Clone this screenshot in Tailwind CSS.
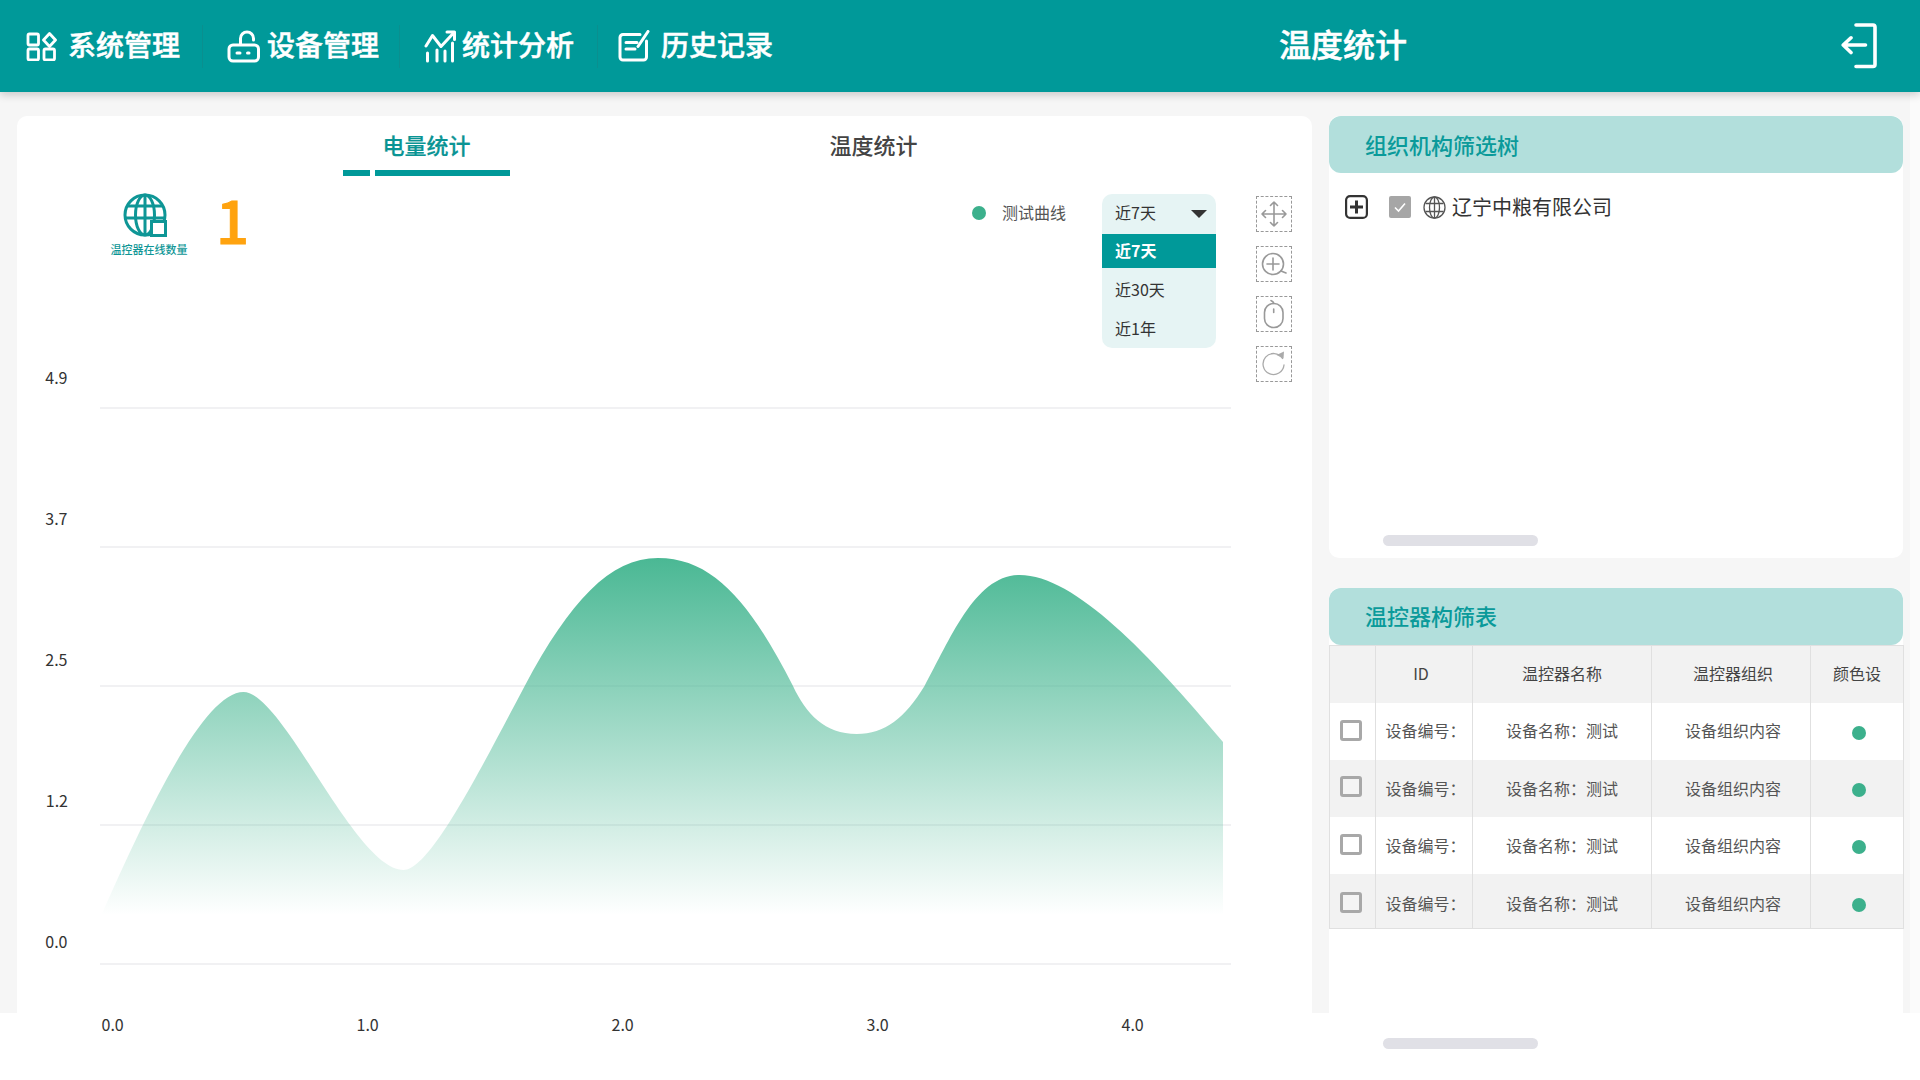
<!DOCTYPE html>
<html lang="zh-CN">
<head>
<meta charset="utf-8">
<title>温度统计</title>
<script src="https://cdn.jsdelivr.net/npm/@tailwindcss/browser@4"></script>
</head>
<body class="bg-white font-['Noto_Sans_CJK_SC',sans-serif] text-[#333] overflow-hidden">
<div class="w-[1920px] h-[1080px] overflow-hidden relative">
  <header class="relative z-10 h-[92px] bg-[#009999] flex items-center text-white shadow-[0_3px_8px_rgba(0,0,0,0.18)]">
    <nav class="flex items-center">
      <a class="w-[203px] h-[43px] pl-[26px] flex items-center border-r border-[#0a8f8f]">
        <svg class="w-[31px] h-[29px] shrink-0" viewBox="26 30 31 29" fill="none" stroke="#fff" stroke-width="2.8" stroke-linejoin="round">
          <rect x="28" y="32" width="10.5" height="11" rx="1.5"/>
          <path d="M49.5 31.5 L55.5 38 L49.5 44.5 L43.5 38 Z"/>
          <rect x="28" y="47" width="10.5" height="11" rx="1.5"/>
          <rect x="44" y="47" width="10.5" height="11" rx="1.5"/>
        </svg>
        <span class="ml-[11px] mb-[5px] text-[28px] leading-none font-medium [-webkit-text-stroke:0.5px] whitespace-nowrap">系统管理</span>
      </a>
      <a class="w-[197px] h-[43px] pl-[24px] flex items-center border-r border-[#0a8f8f]">
        <svg class="w-[33px] h-[33px] shrink-0" viewBox="227 30 33 33" fill="none" stroke="#fff" stroke-width="3" stroke-linecap="round">
          <rect x="229" y="45" width="29.5" height="16" rx="4"/>
          <path d="M240.5 44 V38.5 A6.5 6.5 0 0 1 253.5 38.5 V40"/>
          <path d="M237 53 h3 M247.5 53 h1.5"/>
        </svg>
        <span class="ml-[7px] mb-[5px] text-[28px] leading-none font-medium [-webkit-text-stroke:0.5px] whitespace-nowrap">设备管理</span>
      </a>
      <a class="w-[198px] h-[43px] pl-[24px] flex items-center border-r border-[#0a8f8f]">
        <svg class="w-[33px] h-[33px] shrink-0" viewBox="424 30 33 33" fill="none" stroke="#fff" stroke-width="3" stroke-linecap="round" stroke-linejoin="round">
          <path d="M426 46 L432.5 35.5 L441 46.5 L454 32.5"/>
          <path d="M447 32 H454.5 V39.5"/>
          <path d="M427.5 53 V61 M437 50 V61 M445 51 V61 M452.5 43 V61"/>
        </svg>
        <span class="ml-[5px] mb-[5px] text-[28px] leading-none font-medium [-webkit-text-stroke:0.5px] whitespace-nowrap">统计分析</span>
      </a>
      <a class="h-[43px] pl-[20px] flex items-center">
        <svg class="w-[32px] h-[32px] shrink-0" viewBox="618 31 32 32" fill="none" stroke="#fff" stroke-width="3" stroke-linecap="round" stroke-linejoin="round">
          <path d="M640 35.5 H623 A3 3 0 0 0 620 38.5 V58 A3 3 0 0 0 623 61 H643.5 A3 3 0 0 0 646.5 58 V42"/>
          <path d="M648 32.5 L638 47.5"/>
          <path d="M626 43.5 H637 M626 50 H635"/>
        </svg>
        <span class="ml-[11px] mb-[5px] text-[28px] leading-none font-medium [-webkit-text-stroke:0.5px] whitespace-nowrap">历史记录</span>
      </a>
    </nav>
    <h1 class="ml-[506px] mb-[7px] text-[32px] leading-none font-medium [-webkit-text-stroke:0.5px] whitespace-nowrap">温度统计</h1>
    <button class="ml-auto mr-[43px]">
      <svg class="w-[36px] h-[46px] block" viewBox="1841 22 36 46" fill="none" stroke="#fff" stroke-width="3.6" stroke-linecap="round" stroke-linejoin="round">
        <path d="M1856 24 H1873 A2 2 0 0 1 1875 26 V63.5 A2 2 0 0 1 1873 65.5 H1856"/>
        <path d="M1865.5 44 H1843.5 M1851 36.8 L1843.2 44 L1851 51.5"/>
      </svg>
    </button>
  </header>

  <main class="w-[1910px] h-[921px] bg-[#f6f6f6] pl-[17px] pt-[24px] flex gap-[17px] items-start">
    <section class="relative w-[1295px] h-[897px] bg-white rounded-t-[10px]">
      <svg class="absolute left-0 top-0 overflow-visible" width="1295" height="960" viewBox="17 116 1295 960" fill="#333" font-size="16">
        <defs>
          <linearGradient id="area" x1="0" y1="558" x2="0" y2="915" gradientUnits="userSpaceOnUse">
            <stop offset="0" stop-color="#4ab894"/>
            <stop offset="1" stop-color="#4ab894" stop-opacity="0"/>
          </linearGradient>
        </defs>
        <g stroke="#f1f1f3" stroke-width="2">
          <path d="M100 408 H1231 M100 547 H1231 M100 686 H1231 M100 825 H1231 M100 964 H1231"/>
        </g>
        <path fill="url(#area)" d="M101 916 C151 803 205 692 243.5 692 C283 692 355 870 403.7 870 C430 870 480 770 524.7 686 C570 601 610 558 658 558 C715 558 752 606 793 686 C806 714 825 734 856.8 734 C885 734 905 718 924.5 686 C950 640 975 575 1019.6 575 C1075 575 1150 655 1223 742 L1223 917 L101 917 Z"/>
        <g text-anchor="end">
          <text x="67.5" y="384">4.9</text>
          <text x="67.5" y="525">3.7</text>
          <text x="67.5" y="666">2.5</text>
          <text x="68" y="807">1.2</text>
          <text x="67.5" y="948">0.0</text>
        </g>
        <text x="101.5" y="1031">0.0</text>
        <text x="356.5" y="1031">1.0</text>
        <text x="611.5" y="1031">2.0</text>
        <text x="866.5" y="1031">3.0</text>
        <text x="1121.5" y="1031">4.0</text>
      </svg>

      <div class="relative flex pl-[326px] h-[60px]">
        <div class="w-[167px] flex flex-col items-center relative">
          <span class="text-[22px] leading-none font-medium [-webkit-text-stroke:0.2px] text-[#0a9494] mt-[17px]">电量统计</span>
          <div class="absolute bottom-0 left-0 right-0 flex gap-[5px] h-[6px]">
            <span class="w-[27px] bg-[#009999]"></span>
            <span class="flex-1 bg-[#009999]"></span>
          </div>
        </div>
        <div class="ml-[280px] w-[167px] flex justify-center">
          <span class="text-[22px] leading-none font-medium text-[#444] mt-[17px]">温度统计</span>
        </div>
      </div>

      <div class="relative flex mt-[18px] pl-[94px]">
        <div class="w-[76px] flex flex-col items-center">
          <svg class="w-[44px] h-[44px] ml-[-8px] mt-[-1px]" viewBox="124 193 44 44" fill="none" stroke="#0e9696" stroke-width="3">
            <circle cx="146" cy="215" r="20"/>
            <ellipse cx="146" cy="215" rx="9.5" ry="20"/>
            <path d="M146 195 V235 M128 206 H164 M126 218 H166"/>
            <rect x="152.5" y="221.5" width="14" height="14" fill="#fff"/>
          </svg>
          <span class="mt-[5px] text-[11px] leading-[14px] font-medium text-[#0e9696] whitespace-nowrap">温控器在线数量</span>
        </div>
        <span class="ml-[29px] mt-[-10px] text-[58px] leading-[70px] font-medium [-webkit-text-stroke:1px] text-[#ffa30f]">1</span>

        <div class="absolute left-[955px] top-[10px] flex items-center gap-[16px]">
          <span class="w-[14px] h-[14px] rounded-full bg-[#3cb08c] mt-[1px]"></span>
          <span class="text-[16px] leading-none text-[#555]">测试曲线</span>
        </div>

        <div class="absolute left-[1085px] top-0 w-[114px] rounded-[10px] overflow-hidden bg-[#e6f4f4] text-[16px] pb-[3px]">
          <div class="h-[40px] px-[13px] flex items-center justify-between">
            <span class="mb-[4px]">近7天</span>
            <span class="w-0 h-0 border-x-[8px] border-x-transparent border-t-[8px] border-t-[#333] mr-[-4px]"></span>
          </div>
          <div class="h-[34px] px-[13px] flex items-center bg-[#009999] text-white font-bold"><span class="mb-[2px]">近7天</span></div>
          <div class="h-[42px] px-[13px] flex items-center">近30天</div>
          <div class="h-[35px] px-[13px] flex items-center">近1年</div>
        </div>

        <div class="absolute left-[1239px] top-[2px] flex flex-col gap-[14px]">
          <div class="w-[36px] h-[36px] border border-dashed border-[#999]">
            <svg class="w-[34px] h-[34px]" viewBox="1 1 34 34" fill="none" stroke="#999" stroke-width="1.6" stroke-linecap="round" stroke-linejoin="round">
              <path d="M6 18 H30 M18 6 V30 M9.5 14.5 L6 18 L9.5 21.5 M26.5 14.5 L30 18 L26.5 21.5 M14.5 9.5 L18 6 L21.5 9.5 M14.5 26.5 L18 30 L21.5 26.5"/>
            </svg>
          </div>
          <div class="w-[36px] h-[36px] border border-dashed border-[#999]">
            <svg class="w-[34px] h-[34px]" viewBox="1 1 34 34" fill="none" stroke="#999" stroke-width="1.6" stroke-linecap="round">
              <circle cx="17" cy="18" r="10.5"/>
              <path d="M11 18 H23 M17 12 V24 M25 25 L30 27"/>
            </svg>
          </div>
          <div class="w-[36px] h-[36px] border border-dashed border-[#999]">
            <svg class="w-[34px] h-[34px]" viewBox="1 1 34 34" fill="none" stroke="#999" stroke-width="1.6" stroke-linecap="round">
              <rect x="8.5" y="7.5" width="18.5" height="24" rx="9"/>
              <path d="M17.7 13 V16.5 M17.7 7.5 C17.7 5.5 16 5.5 15 4.5"/>
            </svg>
          </div>
          <div class="w-[36px] h-[36px] border border-dashed border-[#999]">
            <svg class="w-[34px] h-[34px]" viewBox="1 1 34 34" fill="none" stroke="#aaa" stroke-width="1.3" stroke-linecap="round" stroke-linejoin="round">
              <path d="M26.5 12.5 A10.5 10.5 0 1 0 28 19"/>
              <path d="M20.5 9 L27.5 12.5 L28 5.5" stroke="none" fill="#aaa"/>
            </svg>
          </div>
        </div>
      </div>
    </section>

    <aside class="w-[574px] flex flex-col gap-[30px]">
      <section class="relative h-[442px] bg-white rounded-[10px]">
        <h2 class="h-[57px] pl-[36px] flex items-center bg-[#b2dfdc] rounded-[12px] text-[22px] font-medium text-[#0a9a9a]">组织机构筛选树</h2>
        <div class="pl-[16px] pt-[22px] flex items-center">
          <svg class="w-[23px] h-[24px]" viewBox="0 0 23 24" fill="none" stroke="#333" stroke-width="2.2">
            <rect x="1.1" y="1.1" width="20.8" height="21.8" rx="4"/>
            <path d="M5 12 H18 M11.5 5.5 V18.5" stroke-width="3"/>
          </svg>
          <span class="ml-[21px] w-[22px] h-[22px] rounded-[2px] bg-[#a6a6a6] flex items-center justify-center">
            <svg class="w-[14px] h-[14px]" viewBox="0 0 14 14" fill="none" stroke="#fff" stroke-width="1.6"><path d="M2 7.5 L5.5 11 L12 3.5"/></svg>
          </span>
          <svg class="ml-[12px] w-[23px] h-[23px]" viewBox="0 0 23 23" fill="none" stroke="#555" stroke-width="1.3">
            <circle cx="11.5" cy="11.5" r="10.5"/>
            <ellipse cx="11.5" cy="11.5" rx="5" ry="10.5"/>
            <path d="M11.5 1 V22 M2.5 7.5 H20.5 M2.5 15.5 H20.5"/>
          </svg>
          <span class="ml-[6px] text-[20px] leading-none text-[#333] whitespace-nowrap">辽宁中粮有限公司</span>
        </div>
        <div class="absolute left-[54px] top-[419px] w-[155px] h-[11px] rounded-full bg-[#e0e0e6]"></div>
      </section>

      <section class="relative h-[425px] bg-white rounded-t-[10px]">
        <h2 class="h-[57px] pl-[36px] pb-[2px] flex items-center bg-[#b2dfdc] rounded-[12px] text-[22px] font-medium text-[#0a9a9a]">温控器构筛表</h2>
        <table class="w-[574px] table-fixed border-collapse text-[16px] text-center">
          <colgroup>
            <col class="w-[46px]"><col class="w-[97px]"><col class="w-[179px]"><col class="w-[159px]"><col class="w-[93px]">
          </colgroup>
          <thead>
            <tr class="h-[57px] bg-[#f2f2f2] text-[#444]">
              <th class="border border-[#e0e0e0] border-b-0 font-normal"></th>
              <th class="border border-[#e0e0e0] border-b-0 font-normal pr-[6px] pb-[2px]">ID</th>
              <th class="border border-[#e0e0e0] border-b-0 font-normal pb-[2px]">温控器名称</th>
              <th class="border border-[#e0e0e0] border-b-0 font-normal pl-[4px] pb-[2px]">温控器组织</th>
              <th class="border border-[#e0e0e0] border-b-0 font-normal pb-[2px] overflow-hidden whitespace-nowrap">颜色设</th>
            </tr>
          </thead>
          <tbody class="text-[#555]">
            <tr class="h-[57px] bg-white">
              <td class="border-x border-[#e0e0e0] pl-[10px] pb-[2px]"><span class="block w-[22px] h-[21px] rounded-[3px] border-[3px] border-[#a8a8a8] bg-white"></span></td>
              <td class="border-x border-[#e0e0e0] pl-[3px] pb-[2px] whitespace-nowrap">设备编号：</td>
              <td class="border-x border-[#e0e0e0] pb-[2px]">设备名称：测试</td>
              <td class="border-x border-[#e0e0e0] pl-[4px] pb-[2px]">设备组织内容</td>
              <td class="border-x border-[#e0e0e0] pt-[3px] pl-[4px]"><span class="block mx-auto w-[14px] h-[14px] rounded-full bg-[#3cb08c]"></span></td>
            </tr>
            <tr class="h-[57px] bg-[#f2f2f2]">
              <td class="border-x border-[#e0e0e0] pl-[10px] pb-[4px]"><span class="block w-[22px] h-[21px] rounded-[3px] border-[3px] border-[#a8a8a8] bg-[#f4f4f4]"></span></td>
              <td class="border-x border-[#e0e0e0] pl-[3px] pb-[1px] whitespace-nowrap">设备编号：</td>
              <td class="border-x border-[#e0e0e0] pb-[1px]">设备名称：测试</td>
              <td class="border-x border-[#e0e0e0] pl-[4px] pb-[1px]">设备组织内容</td>
              <td class="border-x border-[#e0e0e0] pt-[3px] pl-[4px]"><span class="block mx-auto w-[14px] h-[14px] rounded-full bg-[#3cb08c]"></span></td>
            </tr>
            <tr class="h-[57px] bg-white">
              <td class="border-x border-[#e0e0e0] pl-[10px] pb-[2px]"><span class="block w-[22px] h-[21px] rounded-[3px] border-[3px] border-[#a8a8a8] bg-white"></span></td>
              <td class="border-x border-[#e0e0e0] pl-[3px] whitespace-nowrap">设备编号：</td>
              <td class="border-x border-[#e0e0e0]">设备名称：测试</td>
              <td class="border-x border-[#e0e0e0] pl-[4px]">设备组织内容</td>
              <td class="border-x border-[#e0e0e0] pt-[3px] pl-[4px]"><span class="block mx-auto w-[14px] h-[14px] rounded-full bg-[#3cb08c]"></span></td>
            </tr>
            <tr class="h-[55px] bg-[#f2f2f2] border-b border-[#e0e0e0]">
              <td class="border-x border-[#e0e0e0] pl-[10px] pt-[3px]"><span class="block w-[22px] h-[21px] rounded-[3px] border-[3px] border-[#a8a8a8] bg-[#f4f4f4]"></span></td>
              <td class="border-x border-[#e0e0e0] pl-[3px] pt-[5px] whitespace-nowrap">设备编号：</td>
              <td class="border-x border-[#e0e0e0] pt-[5px]">设备名称：测试</td>
              <td class="border-x border-[#e0e0e0] pl-[4px] pt-[5px]">设备组织内容</td>
              <td class="border-x border-[#e0e0e0] pt-[8px] pl-[4px]"><span class="block mx-auto w-[14px] h-[14px] rounded-full bg-[#3cb08c]"></span></td>
            </tr>
          </tbody>
        </table>
        <div class="absolute left-[54px] top-[450px] w-[155px] h-[11px] rounded-full bg-[#e0e0e6]"></div>
      </section>
    </aside>
  </main>
  <div class="absolute right-0 top-[92px] w-[10px] h-[921px] bg-[#fbfbfb]"></div>
</div>
</body>
</html>
